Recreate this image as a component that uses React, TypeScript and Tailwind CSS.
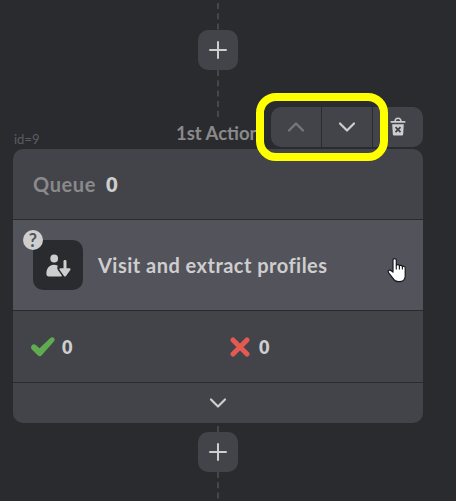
import type { ReactNode } from 'react'

interface ConnectorProps {
  height: number
  offset?: number
}

function Connector({ height, offset = 0 }: ConnectorProps) {
  return (
    <svg width="2" height={height} className="block shrink-0">
      <line
        x1="1"
        y1={offset}
        x2="1"
        y2={height}
        stroke="#46464d"
        strokeWidth="2"
        strokeDasharray="6 4.3"
      />
    </svg>
  )
}

function AddButton() {
  return (
    <button className="flex size-10 shrink-0 items-center justify-center rounded-[10px] bg-[#43434a]">
      <svg width="18" height="18" viewBox="0 0 18 18" stroke="#cecece" strokeWidth="2" strokeLinecap="round">
        <path d="M9 1v16M1 9h16" />
      </svg>
    </button>
  )
}

function Chevron({ up = false, color = '#cecece' }: { up?: boolean; color?: string }) {
  return (
    <svg width="18" height="12" viewBox="0 0 18 12" fill="none" stroke={color} strokeWidth="2.2" strokeLinecap="round" strokeLinejoin="round">
      <path d={up ? 'M2 9.5 9 2.5l7 7' : 'M2 2.5l7 7 7-7'} />
    </svg>
  )
}

function TrashIcon() {
  return (
    <svg width="16" height="19" viewBox="0 0 16 19" className="-mt-[2px]">
      <path d="M5 4.2C5.2 2.1 6.3 1.300 8 1.300s2.800.8 3 2.900" fill="none" stroke="#cecece" strokeWidth="1.5" />
      <rect x=".5" y="4" width="15" height="1.8" rx=".8" fill="#cecece" />
      <path d="M2.2 7.300h11.600l-.6 9.700c-.1 1-.7 1.500-1.600 1.500H4.400c-.9 0-1.500-.5-1.600-1.500z" fill="#cecece" />
      <path d="m5.500 10.200 5 5m0-5-5 5" stroke="#43434a" strokeWidth="1.9" />
    </svg>
  )
}

function PersonDownIcon() {
  return (
    <svg width="25" height="24" viewBox="0 0 25 24" fill="#cecece" className="ml-px mt-px">
      <circle cx="8.2" cy="4.5" r="3.900" />
      <path d="M.4 19.700C.4 14.300 3.400 10.800 7.800 10.800c1.600 0 2.900.3 4 1-.9 1.800-.5 3.500.4 4.800l3.500 4.600c.3.800-.1 1.300-.9 1.300H2.900C1.300 22.500.4 21.500.4 19.700z" />
      <path
        d="M17.500 7.500c0-1.900 3-1.900 3 0v6.800h2.900c1.200 0 1.500.9.9 1.700l-4.300 6c-.6.800-1.400.8-2 0l-4.300-6c-.6-.8-.3-1.700.9-1.700h2.900z"
        stroke="#2a2b2f"
        strokeWidth="1.4"
        paintOrder="stroke"
      />
    </svg>
  )
}

function CheckIcon() {
  return (
    <svg width="24" height="20" viewBox="0 0 24 20" fill="#5fac50">
      <path d="M.9 8.300c1.100-1.300 2.700-1.200 3.900-.2l3.700 3.100L19.300 1c1.300-1.200 2.700-1.100 3.700-.1.900 1 .9 2.300-.1 3.500L10.700 18.300c-1.300 1.400-2.700 1.400-4 0L.9 12.500c-1.200-1.200-1.100-2.900 0-4.200z" />
    </svg>
  )
}

function CrossIcon() {
  return (
    <svg width="20" height="20" viewBox="0 0 20 20" stroke="#e35a51" strokeWidth="5" strokeLinecap="round">
      <path d="m3 3 14 14M17 3 3 17" />
    </svg>
  )
}

function HandCursor() {
  return (
    <svg width="20" height="26" viewBox="0 0 20 26" className="absolute left-[374px] top-[37px]">
      <path
        d="M6 15.200V3.200c0-2.200 3.300-2.200 3.300 0v4.900c.7-.9 2.900-.7 3.100.7.800-.8 2.800-.5 3 .8.900-.6 2.800 0 2.800 1.400v7.900c0 3.700-2.700 5.800-6.200 5.800-3.200 0-4.800-1.200-6.200-3.600L1.900 16.200c-1-1.500-.9-2.600.1-3 1.400-.3 2.800.7 4 2z"
        fill="#fff"
        stroke="#17171f"
        strokeWidth="1.2"
        strokeLinejoin="round"
      />
      <path d="M9.300 8v4.500M12.400 8.800v3.700M15.400 9.600v3" stroke="#17171f" strokeWidth="1.1" />
    </svg>
  )
}

function Stat({ icon, value }: { icon: ReactNode; value: number }) {
  return (
    <div className="flex flex-1 items-center">
      {icon}
      <span className="text-[18px] font-extrabold leading-5">{value}</span>
    </div>
  )
}

export default function App() {
  return (
    <div className="relative flex h-[501px] w-[456px] flex-col items-center overflow-hidden bg-[#2a2b2f] pr-[20px] font-['Lato','Liberation_Sans',sans-serif] text-[#cecece]">
      <Connector height={30} offset={3} />
      <AddButton />
      <Connector height={37} />

      <header className="grid h-[42px] w-[410px] shrink-0 grid-cols-[152px_106px_152px]">
        <span className="pl-px pt-[24px] text-[13px] leading-4 text-[#5c5c61]">
          id=9
        </span>
        <div className="flex flex-col items-center">
          <Connector height={10} offset={4} />
          <span className="mt-[4px] whitespace-nowrap text-[18.5px] font-bold leading-6 text-[#8a8a8a]">
            1st Action
          </span>
        </div>
        <div className="grid h-10 grid-cols-3 gap-px overflow-hidden rounded-[10px]">
          <button className="flex items-center justify-center bg-[#43434a]">
            <Chevron up color="#77777c" />
          </button>
          <button className="flex items-center justify-center bg-[#43434a]">
            <Chevron />
          </button>
          <button className="flex items-center justify-center bg-[#43434a]">
            <TrashIcon />
          </button>
        </div>
      </header>

      <main className="flex h-[274px] w-[410px] shrink-0 flex-col gap-px overflow-hidden rounded-[10px]">
        <div className="flex h-[70px] items-center gap-[10px] bg-[#43434a] px-5 text-[20px] font-bold">
          <span className="tracking-[0.6px] text-[#8a8a8a]">Queue</span>
          <span className="font-extrabold">0</span>
        </div>
        <div className="relative flex h-[90px] items-center bg-[#53535c] px-5">
          <div className="relative flex size-[50px] items-center justify-center rounded-[10px] bg-[#2a2b2f]">
            <PersonDownIcon />
            <span className="absolute -left-[10px] -top-[10px] flex size-5 items-center justify-center rounded-full bg-[#cecece] text-[18px] font-bold leading-5 text-[#53535c]">
              ?
            </span>
          </div>
          <span className="ml-[15px] whitespace-nowrap text-[20px] font-bold tracking-[0.48px]">
            Visit and extract profiles
          </span>
          <HandCursor />
        </div>
        <div className="flex h-[71px] items-center bg-[#43434a] pl-[18px]">
          <Stat icon={<span className="mr-[7px]"><CheckIcon /></span>} value={0} />
          <Stat icon={<span className="ml-[3px] mr-[9px]"><CrossIcon /></span>} value={0} />
        </div>
        <button className="flex h-10 items-center justify-center bg-[#43434a]">
          <Chevron />
        </button>
      </main>

      <Connector height={9} offset={3} />
      <AddButton />
      <Connector height={29} />

      {/* highlight around the move buttons */}
      <div className="absolute left-[256px] top-[93px] h-[68px] w-[132px] rounded-[20px] border-8 border-[#ffff00]" />
    </div>
  )
}
